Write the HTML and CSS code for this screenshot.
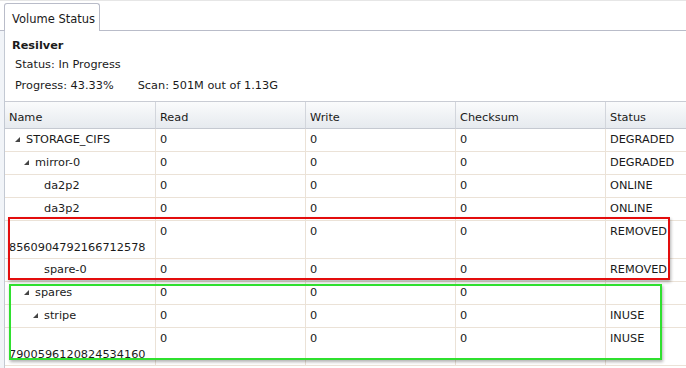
FILE: index.html
```html
<!DOCTYPE html>
<html lang="en">
<head>
    <meta charset="UTF-8">
    <title>Volume Status</title>
    <link rel="stylesheet" href="styles.css">
</head>
<body>
    <div class="tabs">
        <div class="tab">Volume Status</div>
    </div>
    <div class="panel">
        <div class="resilver">
            <h3>Resilver</h3>
            <p>Status: In Progress</p>
            <p class="progress"><span>Progress: 43.33%</span><span>Scan: 501M out of 1.13G</span></p>
        </div>
        <div class="grid-wrap">
            <table class="grid">
                <colgroup>
                    <col class="c-name"><col class="c-num"><col class="c-num"><col class="c-num"><col class="c-num">
                </colgroup>
                <thead>
                    <tr><th>Name</th><th>Read</th><th>Write</th><th>Checksum</th><th>Status</th></tr>
                </thead>
                <tbody>
                    <tr><td class="name"><span class="lvl0"></span><span class="exp"><svg width="5" height="5" viewBox="0 0 5 5"><polygon points="5,0 5,5 0,5"/></svg></span>STORAGE_CIFS</td><td>0</td><td>0</td><td>0</td><td>DEGRADED</td></tr>
                    <tr><td class="name"><span class="lvl1"></span><span class="exp"><svg width="5" height="5" viewBox="0 0 5 5"><polygon points="5,0 5,5 0,5"/></svg></span>mirror-0</td><td>0</td><td>0</td><td>0</td><td>DEGRADED</td></tr>
                    <tr><td class="name"><span class="lvl2"></span><span class="exp"></span>da2p2</td><td>0</td><td>0</td><td>0</td><td>ONLINE</td></tr>
                    <tr><td class="name"><span class="lvl2"></span><span class="exp"></span>da3p2</td><td>0</td><td>0</td><td>0</td><td>ONLINE</td></tr>
                    <tr class="tall"><td class="name"><span class="lvl2"></span><span class="exp"></span><br>8560904792166712578</td><td>0</td><td>0</td><td>0</td><td>REMOVED</td></tr>
                    <tr><td class="name"><span class="lvl2"></span><span class="exp"></span>spare-0</td><td>0</td><td>0</td><td>0</td><td>REMOVED</td></tr>
                    <tr><td class="name"><span class="lvl1"></span><span class="exp"><svg width="5" height="5" viewBox="0 0 5 5"><polygon points="5,0 5,5 0,5"/></svg></span>spares</td><td>0</td><td>0</td><td>0</td><td></td></tr>
                    <tr><td class="name"><span class="lvl2b"></span><span class="exp"><svg width="5" height="5" viewBox="0 0 5 5"><polygon points="5,0 5,5 0,5"/></svg></span>stripe</td><td>0</td><td>0</td><td>0</td><td>INUSE</td></tr>
                    <tr class="tall"><td class="name"><span class="lvl2"></span><span class="exp"></span><br>7900596120824534160</td><td>0</td><td>0</td><td>0</td><td>INUSE</td></tr>
                </tbody>
            </table>
            <div class="mark mark-red"></div>
            <div class="mark mark-green"></div>
        </div>
    </div>
</body>
</html>
```

FILE: styles.css
```css
body {
    margin: 0;
    font-family: "DejaVu Sans", Verdana, sans-serif;
    font-size: 11.3px;
    color: #1a1a1a;
    background: #f1f4f8;
    overflow: hidden;
    height: 368px;
}
.tabs {
    background: white;
    border-top: 1px solid #e6e6e6;
    border-bottom: 1px solid #b9bcc9;
    height: 29px;
    padding-left: 4px;
    display: flex;
    align-items: flex-end;
}
.tab {
    width: 87px;
    height: 27px;
    margin-bottom: -1px;
    padding-left: 7px;
    line-height: 31px;
    font-size: 11.5px;
    background: white;
    border: 1px solid #b9bcc9;
    border-bottom: none;
    border-radius: 3px 3px 0 0;
}
.panel {
    margin-left: 4px;
    border-left: 1px solid #c3c9d3;
    background: white;
    height: 337px;
}
.resilver {
    padding: 7px 0 0 7px;
    height: 63px;
}
.resilver h3 {
    margin: 0;
    font-size: 11.3px;
    line-height: 16px;
}
.resilver p {
    margin: 3px 0 0 3px;
    line-height: 16px;
}
.resilver .progress {
    margin-top: 5px;
}
.resilver .progress span + span {
    margin-left: 24px;
}
.grid-wrap {
    position: relative;
    border-top: 1px solid #c9ccd4;
}
.grid {
    border-collapse: separate;
    border-spacing: 0;
    table-layout: fixed;
    width: 751px;
}
.c-name { width: 151px; }
.c-num { width: 150px; }
.grid th {
    text-align: left;
    font-weight: normal;
    padding: 8px 4px 2px;
    line-height: 16px;
    background: linear-gradient(#fafbfc, #e6eaef);
    border-right: 1px solid #d3d6dc;
    border-bottom: 1px solid #c5c9d1;
}
.grid td {
    padding: 3px 4px;
    line-height: 16px;
    vertical-align: top;
    white-space: nowrap;
    border-right: 1px solid #ebe2d7;
    border-bottom: 1px solid #ebe2d7;
}
.grid tr.tall td {
    padding-bottom: 2px;
}
.name span {
    display: inline-block;
}
.lvl0 { width: 6px; }
.lvl1 { width: 15px; }
.lvl2 { width: 24px; }
.lvl2b { width: 24px; }
.exp {
    width: 11px;
}
.exp svg {
    fill: #454545;
    display: block;
    margin-bottom: 1px;
}
.mark {
    position: absolute;
    border: 2px solid;
    box-shadow: 1px 2px 3px rgba(0, 0, 0, 0.3);
}
.mark-red {
    border-color: #e30d0d;
    left: 3px;
    top: 115px;
    width: 658px;
    height: 59px;
}
.mark-green {
    border-color: #2fe02f;
    left: 4px;
    top: 182px;
    width: 649px;
    height: 72px;
}
```
